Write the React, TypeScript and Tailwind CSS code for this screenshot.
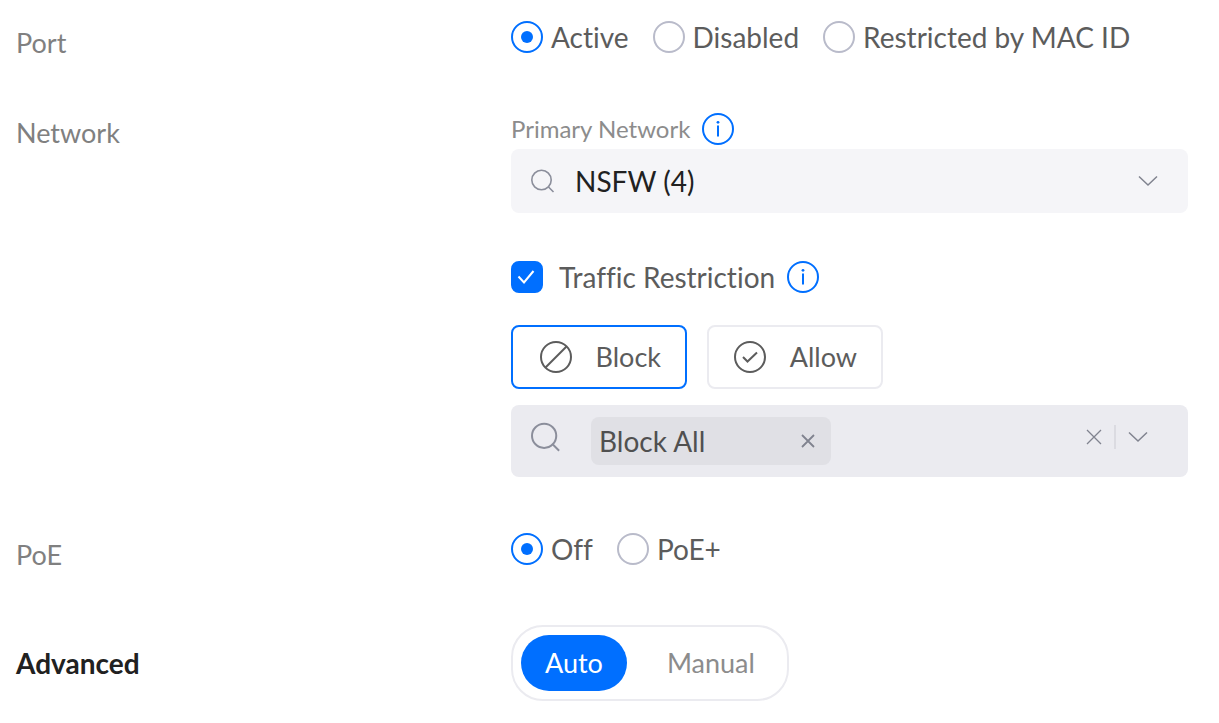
import { useState } from "react";
import type { ReactNode } from "react";

interface RowProps {
  label: string;
  labelClass?: string;
  children: ReactNode;
}

const Row = ({ label, labelClass = "pt-2 text-[27px] text-[#808080]", children }: RowProps) => (
  <div className="grid grid-cols-[495fr_677fr]">
    <div className={`leading-7 ${labelClass}`}>{label}</div>
    <div className="min-w-0">{children}</div>
  </div>
);

interface RadioGroupProps {
  name: string;
  options: string[];
  value: string;
  onChange: (value: string) => void;
}

const RadioGroup = ({ name, options, value, onChange }: RadioGroupProps) => (
  <div className="flex flex-wrap gap-6" role="radiogroup" aria-label={name}>
    {options.map((option) => (
      <label key={option} className="flex items-center gap-2 text-[28px] leading-8 text-[#5c5c5c]">
        <input
          type="radio"
          name={name}
          value={option}
          checked={value === option}
          onChange={() => onChange(option)}
          className="grid h-8 w-8 shrink-0 appearance-none place-content-center rounded-full border-2 border-[#b9bbca] checked:border-[#006fff] checked:before:h-3 checked:before:w-3 checked:before:rounded-full checked:before:bg-[#006fff]"
        />
        {option}
      </label>
    ))}
  </div>
);

const InfoButton = ({ label }: { label: string }) => (
  <button type="button" aria-label={label} className="shrink-0 text-[#006fff]">
    <svg width="32" height="32" viewBox="0 0 32 32" fill="none">
      <circle cx="16" cy="16" r="15" stroke="currentColor" strokeWidth="2" />
      <circle cx="16" cy="9.3" r="1.4" fill="currentColor" />
      <path d="M16 12.5v11" stroke="currentColor" strokeWidth="2" />
    </svg>
  </button>
);

const SearchIcon = ({ size }: { size: number }) => (
  <svg width={size} height={size} viewBox="0 0 24 24" fill="none" stroke="#8b8e9b" strokeWidth="1.6" className="shrink-0">
    <circle cx="10.5" cy="11" r="9.7" />
    <path d="M17.5 18l5 5" />
  </svg>
);

const ChevronIcon = () => (
  <svg width="20" height="12" viewBox="0 0 20 12" fill="none" stroke="#80838f" strokeWidth="1.5">
    <path d="M1 1.5l9 8.5 9-8.5" />
  </svg>
);

const actions = [
  {
    label: "Block",
    icon: <path d="M5.5 26.5l21-21" />,
  },
  {
    label: "Allow",
    icon: <path d="M9 16l4.5 4.5L23 11.5" />,
  },
];

export default function App() {
  const [port, setPort] = useState("Active");
  const [poe, setPoe] = useState("Off");
  const [restricted, setRestricted] = useState(true);
  const [action, setAction] = useState("Block");
  const [tags, setTags] = useState(["Block All"]);
  const [mode, setMode] = useState("Auto");

  return (
    <main className="flex min-h-screen flex-col gap-14 bg-white pt-[21px] pr-[31px] pb-5 pl-4 font-['Lato','Liberation_Sans',sans-serif] [font-variant-ligatures:no-common-ligatures]">
      <Row label="Port">
        <RadioGroup
          name="Port"
          options={["Active", "Disabled", "Restricted by MAC ID"]}
          value={port}
          onChange={setPort}
        />
      </Row>

      <Row label="Network" labelClass="pt-1.5 text-[27px] text-[#808080]">
        <div className="mb-1 flex items-center gap-3">
          <label htmlFor="primary-network" className="text-2xl leading-8 text-[#8c8c8c]">
            Primary Network
          </label>
          <InfoButton label="About primary network" />
        </div>
        <div className="relative">
          <select
            id="primary-network"
            className="h-16 w-full appearance-none rounded-lg bg-[#f5f5f8] pr-20 pl-16 text-[28px] text-[#212121]"
          >
            <option>NSFW (4)</option>
          </select>
          <span className="pointer-events-none absolute inset-y-0 left-5 flex items-center">
            <SearchIcon size={24} />
          </span>
          <span className="pointer-events-none absolute inset-y-0 right-[30px] flex items-center">
            <ChevronIcon />
          </span>
        </div>

        <div className="mt-12 flex items-center gap-3">
          <label className="flex items-center gap-4 text-[28px] leading-8 text-[#5c5c5c]">
            <span className="relative flex">
              <input
                type="checkbox"
                checked={restricted}
                onChange={(e) => setRestricted(e.target.checked)}
                className="h-8 w-8 appearance-none rounded-lg border-2 border-[#b9bbca] checked:border-[#006fff] checked:bg-[#006fff]"
              />
              {restricted && (
                <svg
                  width="32"
                  height="32"
                  viewBox="0 0 32 32"
                  fill="none"
                  stroke="white"
                  strokeWidth="2"
                  className="pointer-events-none absolute inset-0"
                >
                  <path d="M7.5 15.5l5.5 6L22.5 10" />
                </svg>
              )}
            </span>
            Traffic Restriction
          </label>
          <InfoButton label="About traffic restriction" />
        </div>

        <div className="mt-8 flex gap-5">
          {actions.map(({ label, icon }) => (
            <button
              key={label}
              type="button"
              aria-pressed={action === label}
              onClick={() => setAction(label)}
              className={`flex h-16 w-44 items-center justify-end gap-6 rounded-lg border-2 pr-6 text-[27px] text-[#5c5c5c] ${
                action === label ? "border-[#006fff]" : "border-[#ebebf0]"
              }`}
            >
              <svg width="32" height="32" viewBox="0 0 32 32" fill="none" stroke="currentColor" strokeWidth="2">
                <circle cx="16" cy="16" r="15" />
                {icon}
              </svg>
              {label}
            </button>
          ))}
        </div>

        <div className="mt-4 flex min-h-[72px] items-start rounded-lg bg-[#ebebf0] pr-10 pl-5">
          <span className="flex h-16 w-[60px] shrink-0 items-center">
            <SearchIcon size={30} />
          </span>
          <div className="flex flex-1 flex-wrap gap-2 py-3">
            {tags.map((tag) => (
              <span
                key={tag}
                className="flex h-12 w-60 items-center justify-between rounded-lg bg-[#e0e0e5] pr-4 pl-2 text-[28px] text-[#505050]"
              >
                {tag}
                <button
                  type="button"
                  aria-label={`Remove ${tag}`}
                  onClick={() => setTags(tags.filter((t) => t !== tag))}
                >
                  <svg width="14" height="14" viewBox="0 0 14 14" stroke="#80838f" strokeWidth="1.8">
                    <path d="M1 1l12 12M13 1L1 13" />
                  </svg>
                </button>
              </span>
            ))}
          </div>
          <div className="flex h-16 shrink-0 items-center gap-3">
            <button type="button" aria-label="Clear all" onClick={() => setTags([])}>
              <svg width="16" height="16" viewBox="0 0 16 16" stroke="#80838f" strokeWidth="1.3">
                <path d="M1 1l14 14M15 1L1 15" />
              </svg>
            </button>
            <span className="h-6 w-0.5 bg-[#dbdbe1]" />
            <button type="button" aria-label="Show options">
              <ChevronIcon />
            </button>
          </div>
        </div>
      </Row>

      <Row label="PoE">
        <RadioGroup name="PoE" options={["Off", "PoE+"]} value={poe} onChange={setPoe} />
      </Row>

      <Row label="Advanced" labelClass="self-center text-[28px] font-bold text-[#212121]">
        <div className="inline-flex gap-4 rounded-[32px] border-2 border-[#ebebf0] p-2">
          {["Auto", "Manual"].map((option) => (
            <button
              key={option}
              type="button"
              aria-pressed={mode === option}
              onClick={() => setMode(option)}
              className={`h-14 rounded-[28px] px-6 text-[27px] ${
                mode === option ? "bg-[#006fff] text-white" : "text-[#8c8c8c]"
              }`}
            >
              {option}
            </button>
          ))}
        </div>
      </Row>
    </main>
  );
}
